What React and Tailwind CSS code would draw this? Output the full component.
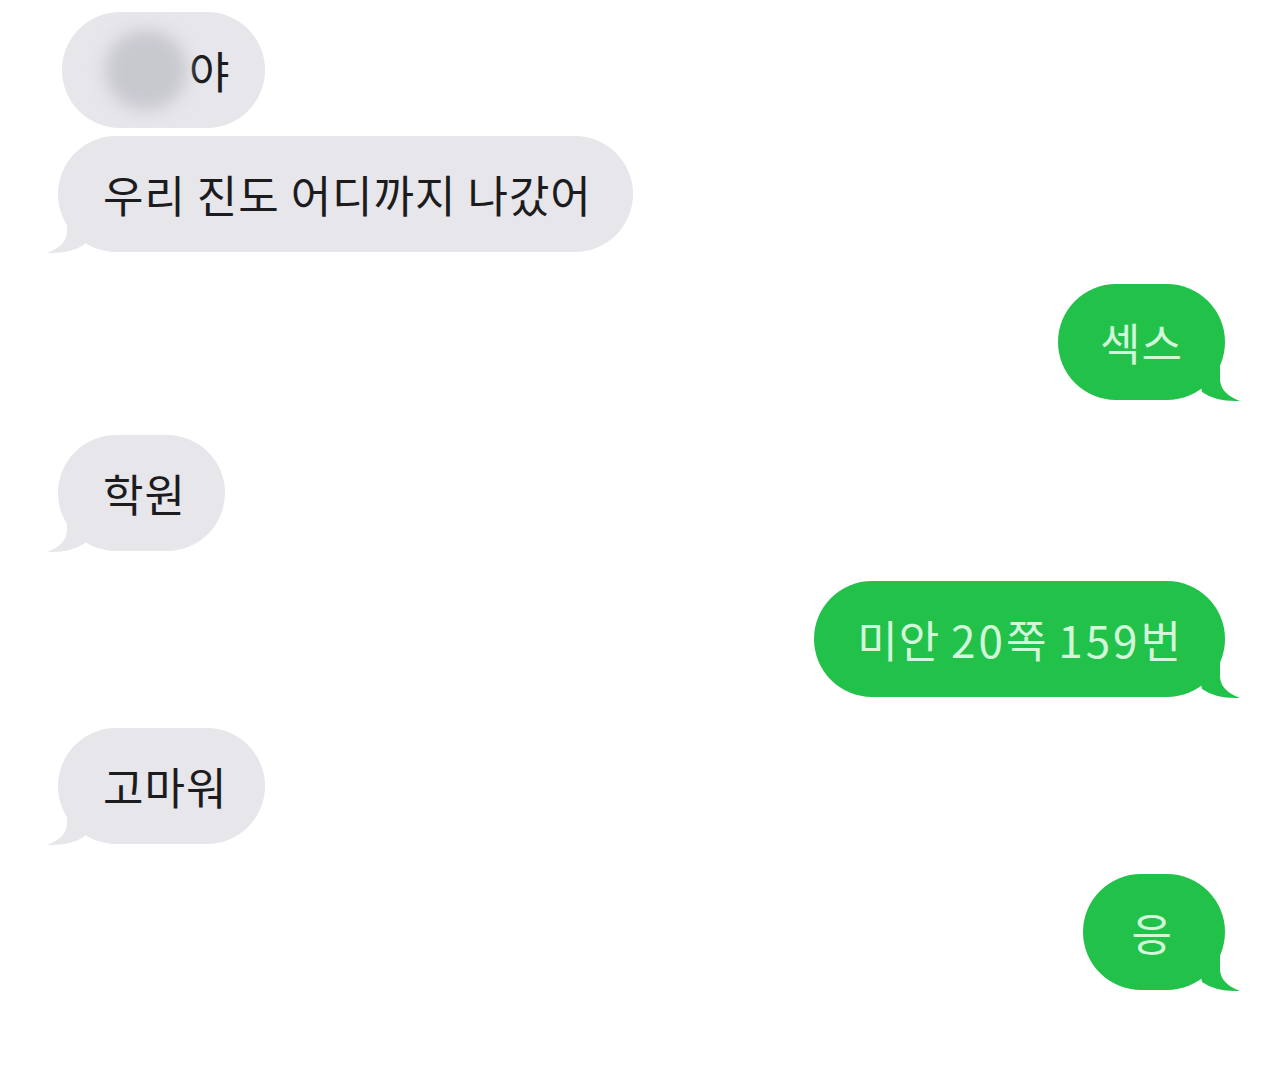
import React from "react";

const font = { fontFamily: '"Noto Sans CJK KR", "Noto Sans", sans-serif' };

function TailLeft() {
  return (
    <svg
      className="absolute left-[-11px] bottom-[-2px]"
      width="50"
      height="50"
      viewBox="0 0 50 50"
    >
      <path d="M20 0 L20 28 Q19 42 0 49 Q24 50 38 40 L46 0 Z" fill="#e6e6eb" />
    </svg>
  );
}

function TailRight() {
  return (
    <svg
      className="absolute right-[-15px] bottom-[-2px]"
      width="50"
      height="50"
      viewBox="0 0 50 50"
    >
      <path d="M30 0 L30 28 Q31 42 50 49 Q26 50 12 40 L4 0 Z" fill="#22c24a" />
    </svg>
  );
}

function Gray({ children, className = "", tail = true }) {
  return (
    <div
      className={`relative self-start flex items-center h-[116px] rounded-[58px] bg-[#e6e6eb] text-[44px] tracking-[1px] leading-none text-[#1c1c1e] ${className}`}
      style={font}
    >
      {tail && <TailLeft />}
      <span className="relative">{children}</span>
    </div>
  );
}

function Green({ children, className = "" }) {
  return (
    <div
      className={`relative self-end flex items-center h-[116px] rounded-[58px] bg-[#22c24a] text-[44px] tracking-[1px] leading-none text-[#d2f8da] mr-[55px] ${className}`}
      style={font}
    >
      <TailRight />
      <span className="relative">{children}</span>
    </div>
  );
}

export default function App() {
  return (
    <div className="w-[1280px] h-[1066px] bg-white flex flex-col overflow-hidden">
      <Gray tail={false} className="mt-[12px] ml-[62px] pl-[43px] pr-[35px] h-[113px]">
        <span className="flex items-center">
          <span className="w-[82px] h-[80px] rounded-full bg-[#c8c8cf] blur-[8px] mr-[2px]" />
          <span>야</span>
        </span>
      </Gray>
      <Gray className="mt-[8px] ml-[58px] pl-[45px] pr-[41px]">우리 진도 어디까지 나갔어</Gray>
      <Green className="mt-[32px] px-[42px]">섹스</Green>
      <Gray className="mt-[35px] ml-[58px] pl-[45px] pr-[39px]">학원</Gray>
      <Green className="mt-[30px] px-[43px]">
        미안 <span className="tracking-[3px]">20</span>쪽 <span className="tracking-[3px]">159</span>번
      </Green>
      <Gray className="mt-[31px] ml-[58px] pl-[45px] pr-[38px]">고마워</Gray>
      <Green className="mt-[30px] pl-[49px] pr-[52px]">응</Green>
    </div>
  );
}
